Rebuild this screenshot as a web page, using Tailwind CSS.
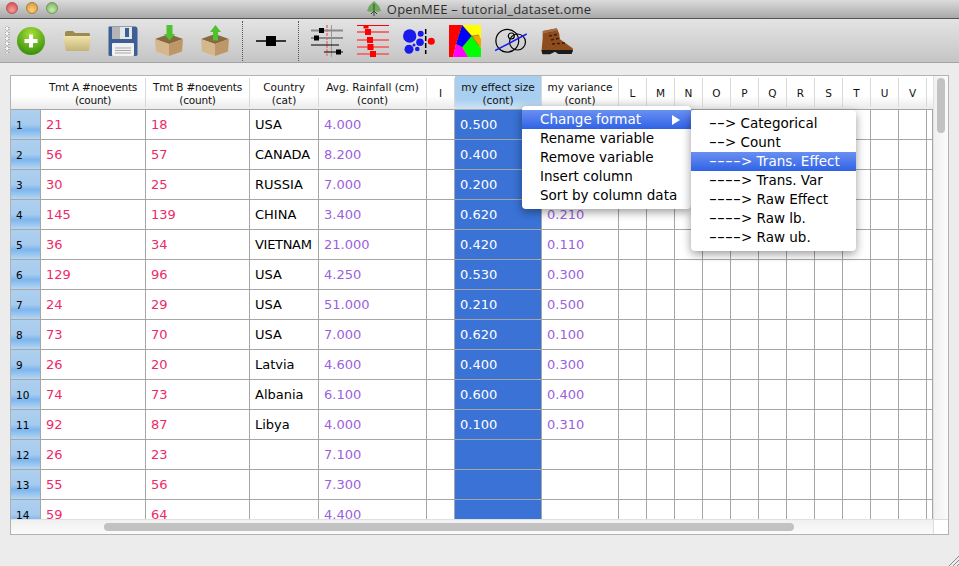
<!DOCTYPE html>
<html>
<head>
<meta charset="utf-8">
<title>OpenMEE</title>
<script src="https://cdn.jsdelivr.net/npm/@tailwindcss/browser@4"></script>
</head>
<body class="m-0 overflow-hidden">
<div class="relative w-[959px] h-[566px] overflow-hidden bg-[#ececec] font-['DejaVu_Sans',sans-serif] text-[13px] text-black">

  <!-- title bar -->
  <div class="relative h-[19px] flex items-center justify-center bg-gradient-to-b from-[#dcdcdc] to-[#a9a9a9] border-b border-[#555555]">
    <div class="absolute left-[6px] top-[2px] flex gap-2">
      <span class="w-3 h-3 rounded-full border border-[#a85a5a] bg-[radial-gradient(circle_at_50%_70%,#f6a0a0,#d8403f)]"></span>
      <span class="w-3 h-3 rounded-full border border-[#a8803a] bg-[radial-gradient(circle_at_50%_70%,#f8d080,#dc9030)]"></span>
      <span class="w-3 h-3 rounded-full border border-[#6f9a5a] bg-[radial-gradient(circle_at_50%_70%,#c8eab0,#70ad50)]"></span>
    </div>
    <div class="flex items-center gap-[5px] ml-[-2px]">
      <svg width="16" height="16" viewBox="0 0 16 16"><path d="M8 0 L13 5 L15 10 L11 11 L8 9 L5 11 L1 10 L3 5 Z" fill="#6fa85a"/><path d="M8 3 V15 M5 13 L8 10 L11 13" stroke="#2f4a2a" stroke-width="1" fill="none"/></svg>
      <span class="font-['Open_Sans',sans-serif] text-[13px] text-[#2e2e2e] leading-none tracking-[0.2px]">OpenMEE – tutorial_dataset.ome</span>
    </div>
  </div>

  <!-- toolbar -->
  <div class="relative h-[44px] flex items-center pl-[15px] bg-gradient-to-b from-[#e4e4e4] to-[#c5c5c5] border-b border-[#a3a3a3]">
    <div class="absolute left-[5px] top-[7px] w-[5px] h-[27px] [background-image:radial-gradient(circle,#f4f4f4_45%,#a8a8a8_55%,transparent_70%)] [background-size:4px_5px]"></div>
    <div class="flex items-center gap-[14px]">
      <!-- add -->
      <svg width="32" height="32" viewBox="0 0 32 32"><defs><radialGradient id="g1" cx="50%" cy="25%" r="80%"><stop offset="0" stop-color="#a6de3a"/><stop offset="1" stop-color="#2f8a08"/></radialGradient></defs><circle cx="16" cy="16" r="14" fill="url(#g1)"/><path d="M16 9.5 V22.5 M9.5 16 H22.5" stroke="#ffffff" stroke-width="4"/></svg>
      <!-- folder -->
      <svg width="32" height="32" viewBox="0 0 32 32"><defs><linearGradient id="g2" x1="0" y1="0" x2="0" y2="1"><stop offset="0" stop-color="#f0e3ab"/><stop offset="1" stop-color="#c4b377"/></linearGradient></defs><path d="M4 8 Q4 6 6 6 H12 L14 8 H28 Q29 8 29 10 V13 H4 Z" fill="#9b8a52"/><path d="M2 11 H30 L28 26 H5 Z" fill="url(#g2)"/></svg>
      <!-- floppy -->
      <svg width="32" height="32" viewBox="0 0 32 32"><path d="M2 1.5 H28.500 Q30.500 1.500 30.500 4 V29.500 Q30.500 31 28.500 31 H3 Q1.500 31 1.500 29.500 V2 Z" fill="#3c5f96"/><rect x="5" y="2" width="20" height="12" fill="#e6e6e6"/><rect x="5" y="2" width="8" height="12" fill="#b5b5b5"/><rect x="18" y="3" width="4" height="9" fill="#3c5f96"/><rect x="5" y="18" width="22" height="13" rx="1" fill="#f2f2f2"/><path d="M8 23 H24 M8 25.500 H24 M8 28 H24" stroke="#a9a9a9"/></svg>
      <!-- box in -->
      <svg width="32" height="32" viewBox="0 0 32 32"><path d="M2 14 L16 9 L30 14 L16 19 Z" fill="#86693f"/><path d="M2 14 L16 19 V31 L3 26.500 Z" fill="#d4b78a"/><path d="M30 14 L16 19 V31 L29 26.500 Z" fill="#bd9768"/><path d="M13.500 0 H19.500 V9 H22 L16.500 15.500 L11 9 H13.500 Z" fill="#4fc22e"/></svg>
      <!-- box out -->
      <svg width="32" height="32" viewBox="0 0 32 32"><path d="M2 14 L16 9 L30 14 L16 19 Z" fill="#86693f"/><path d="M2 14 L16 19 V31 L3 26.500 Z" fill="#d4b78a"/><path d="M30 14 L16 19 V31 L29 26.500 Z" fill="#bd9768"/><path d="M14 15.500 H19 V7 H22 L16.500 0 L11 7 H14 Z" fill="#4fc22e"/></svg>
    </div>
    <div class="ml-[11px] w-px h-[40px] border-l border-dotted border-[#555555]"></div>
    <svg class="ml-[12px]" width="32" height="32" viewBox="0 0 32 32"><path d="M1 16 H31" stroke="#000" stroke-width="1.500"/><rect x="11" y="11" width="10" height="10" fill="#000"/></svg>
    <div class="ml-[11px] w-px h-[40px] border-l border-dotted border-[#555555]"></div>
    <div class="ml-[12px] flex items-center gap-[14px]">
      <!-- sliders 1 -->
      <svg width="32" height="32" viewBox="0 0 32 32"><path d="M16 0 V32" stroke="#f08a8a" stroke-width="2" stroke-dasharray="3 1"/><path d="M20.500 0 V32" stroke="#999"/><path d="M0 5.500 H32 M0 13 H32" stroke="#8a8a8a" stroke-width="2"/><path d="M0 20 H28 M13 27 H32" stroke="#000"/><rect x="8" y="3" width="5" height="5" fill="#000"/><rect x="3" y="10.500" width="5" height="5" fill="#000"/><rect x="25" y="24.500" width="5" height="5" fill="#000"/></svg>
      <!-- sliders 2 -->
      <svg width="32" height="32" viewBox="0 0 32 32"><path d="M0 0.500 H32 M0 7 H32" stroke="#ff0000"/><path d="M0 15 H32 M0 22 H32 M0 29 H32" stroke="#f07070" stroke-width="2"/><rect x="6.500" y="0" width="5" height="3.500" fill="#f00"/><rect x="8" y="4" width="6" height="6" fill="#f00"/><rect x="10" y="12" width="6" height="6" fill="#f00"/><rect x="10.500" y="19" width="6" height="6" fill="#f00"/><rect x="13" y="26" width="6" height="6" fill="#f00"/></svg>
      <!-- circles -->
      <svg width="32" height="32" viewBox="0 0 32 32"><g fill="#1a1aee"><circle cx="6.700" cy="11" r="6.700"/><circle cx="17.700" cy="8.700" r="3"/><circle cx="17" cy="17.300" r="3.800"/><circle cx="11" cy="20" r="1.500"/><circle cx="6" cy="24.300" r="4.500"/><circle cx="14.300" cy="24" r="2.300"/></g><path d="M22.700 4 V29" stroke="#000" stroke-width="1.500" stroke-dasharray="5 2"/><circle cx="28.300" cy="16.300" r="3.500" fill="#f00"/></svg>
      <!-- voronoi -->
      <svg width="32" height="32" viewBox="0 0 32 32"><rect width="32" height="32" fill="#ff0"/><path d="M0 0 H13 L7 19 L4 32 H0 Z" fill="#f00"/><path d="M13 0 L22.700 11 L13.300 22.300 L7 19 Z" fill="#00f"/><path d="M22.700 11 L30 10 L32 14 V23 L30 21 Z" fill="#f7a400"/><path d="M22.700 11 L30 21 L32 23 V32 H19 L13.300 22.300 Z" fill="#0f0"/><path d="M7 19 L13.300 22.300 L19 32 H4 Z" fill="#f0f"/><path d="M13 0 L22.700 11 L13.300 22.300 L7 19 M22.700 11 L30 10 M22.700 11 L30 21" stroke="#333" stroke-width="0.400" fill="none"/></svg>
      <!-- venn -->
      <svg width="32" height="32" viewBox="0 0 32 32" fill="none" stroke="#000" stroke-width="1.200"><circle cx="12.300" cy="15.700" r="11.400"/><circle cx="16.300" cy="11" r="3"/><circle cx="22.500" cy="17" r="8"/><path d="M0 25.700 L31.700 9" stroke="#1a1aee" stroke-width="1.500"/></svg>
      <!-- boot -->
      <svg width="32" height="32" viewBox="0 0 32 32"><path d="M1.700 6 L15.700 3.300 L18 8.300 L19 14.300 L25.700 19 L31.700 23.300 L32 26.500 H0.500 L1.700 13 Z" fill="#8f4c1d"/><path d="M0.500 25 H32 L30.700 29 H17.300 L14 26.700 L9 29.300 H1.300 Z" fill="#1c1c1c"/><path d="M7 7 L17 5 M8 11 L18 9 M10 15 L19 13 M11 19 L24 18" stroke="#3a2010" stroke-width="1.500" stroke-dasharray="3 2"/><path d="M2 6 L15.500 3.500 L16.500 6 L2 8.500 Z" fill="#a76a3a"/></svg>
    </div>
  </div>

  <!-- table frame -->
  <div class="relative mt-[12px] ml-[10px] w-[939px] h-[460px] border border-[#b2b2b2] bg-white overflow-hidden">
    <!-- header -->
    <div class="grid grid-cols-[30px_105px_104px_69px_108px_28px_87px_77px_repeat(11,28px)_6px] h-[34px] border-b border-[#a6a6a6] bg-gradient-to-b from-[#ffffff] from-60% to-[#ebebeb] text-[10.5px] leading-[13px] text-center text-[#111] [&>div]:flex [&>div]:items-center [&>div]:justify-center [&>div]:border-r [&>div]:border-[#d8d8d8] [&>div]:my-[2px] [&>div]:pt-[2px]">
      <div class="!border-r-0"></div>
      <div class="tracking-[-0.25px]">Tmt A #noevents<br>(count)</div>
      <div class="tracking-[-0.2px]">Tmt B #noevents<br>(count)</div>
      <div>Country<br>(cat)</div>
      <div>Avg. Rainfall (cm)<br>(cont)</div>
      <div>I</div>
      <div class="!my-0 bg-gradient-to-b from-[#a9cff0] from-70% to-[#cfe3f5]">my effect size<br>(cont)</div>
      <div>my variance<br>(cont)</div>
      <div>L</div><div>M</div><div>N</div><div>O</div><div>P</div><div>Q</div><div>R</div><div>S</div><div>T</div><div>U</div><div>V</div><div class="!border-r-0"></div>
    </div>
    <!-- rows -->
    <div class="grid grid-cols-[30px_105px_104px_69px_108px_28px_87px_77px_repeat(11,28px)_6px] auto-rows-[30px] [&>div]:border-r [&>div]:border-b [&>div]:border-[#a6a6a6] [&>div]:flex [&>div]:items-center [&>div]:pl-[5px] [&>div:nth-child(20n+1)]:bg-[linear-gradient(#aed0ef_0%,#a6cbee_50%,#7db6ee_68%,#b5d6f3_100%)] [&>div:nth-child(20n+1)]:text-[10.5px] [&>div:nth-child(20n+1)]:pt-[3px]">
      <div>1</div><div class="text-[#ee2a66]">21</div><div class="text-[#ee2a66]">18</div><div>USA</div><div class="text-[#9b5fe0]">4.000</div><div></div><div class="bg-[#3a72d6] text-white">0.500</div><div class="text-[#9b5fe0]"></div><div></div><div></div><div></div><div></div><div></div><div></div><div></div><div></div><div></div><div></div><div></div><div></div>
      <div>2</div><div class="text-[#ee2a66]">56</div><div class="text-[#ee2a66]">57</div><div>CANADA</div><div class="text-[#9b5fe0]">8.200</div><div></div><div class="bg-[#3a72d6] text-white">0.400</div><div class="text-[#9b5fe0]"></div><div></div><div></div><div></div><div></div><div></div><div></div><div></div><div></div><div></div><div></div><div></div><div></div>
      <div>3</div><div class="text-[#ee2a66]">30</div><div class="text-[#ee2a66]">25</div><div>RUSSIA</div><div class="text-[#9b5fe0]">7.000</div><div></div><div class="bg-[#3a72d6] text-white">0.200</div><div class="text-[#9b5fe0]"></div><div></div><div></div><div></div><div></div><div></div><div></div><div></div><div></div><div></div><div></div><div></div><div></div>
      <div>4</div><div class="text-[#ee2a66]">145</div><div class="text-[#ee2a66]">139</div><div>CHINA</div><div class="text-[#9b5fe0]">3.400</div><div></div><div class="bg-[#3a72d6] text-white">0.620</div><div class="text-[#9b5fe0]">0.210</div><div></div><div></div><div></div><div></div><div></div><div></div><div></div><div></div><div></div><div></div><div></div><div></div>
      <div>5</div><div class="text-[#ee2a66]">36</div><div class="text-[#ee2a66]">34</div><div class="tracking-[-0.3px]">VIETNAM</div><div class="text-[#9b5fe0]">21.000</div><div></div><div class="bg-[#3a72d6] text-white">0.420</div><div class="text-[#9b5fe0]">0.110</div><div></div><div></div><div></div><div></div><div></div><div></div><div></div><div></div><div></div><div></div><div></div><div></div>
      <div>6</div><div class="text-[#ee2a66]">129</div><div class="text-[#ee2a66]">96</div><div>USA</div><div class="text-[#9b5fe0]">4.250</div><div></div><div class="bg-[#3a72d6] text-white">0.530</div><div class="text-[#9b5fe0]">0.300</div><div></div><div></div><div></div><div></div><div></div><div></div><div></div><div></div><div></div><div></div><div></div><div></div>
      <div>7</div><div class="text-[#ee2a66]">24</div><div class="text-[#ee2a66]">29</div><div>USA</div><div class="text-[#9b5fe0]">51.000</div><div></div><div class="bg-[#3a72d6] text-white">0.210</div><div class="text-[#9b5fe0]">0.500</div><div></div><div></div><div></div><div></div><div></div><div></div><div></div><div></div><div></div><div></div><div></div><div></div>
      <div>8</div><div class="text-[#ee2a66]">73</div><div class="text-[#ee2a66]">70</div><div>USA</div><div class="text-[#9b5fe0]">7.000</div><div></div><div class="bg-[#3a72d6] text-white">0.620</div><div class="text-[#9b5fe0]">0.100</div><div></div><div></div><div></div><div></div><div></div><div></div><div></div><div></div><div></div><div></div><div></div><div></div>
      <div>9</div><div class="text-[#ee2a66]">26</div><div class="text-[#ee2a66]">20</div><div>Latvia</div><div class="text-[#9b5fe0]">4.600</div><div></div><div class="bg-[#3a72d6] text-white">0.400</div><div class="text-[#9b5fe0]">0.300</div><div></div><div></div><div></div><div></div><div></div><div></div><div></div><div></div><div></div><div></div><div></div><div></div>
      <div>10</div><div class="text-[#ee2a66]">74</div><div class="text-[#ee2a66]">73</div><div>Albania</div><div class="text-[#9b5fe0]">6.100</div><div></div><div class="bg-[#3a72d6] text-white">0.600</div><div class="text-[#9b5fe0]">0.400</div><div></div><div></div><div></div><div></div><div></div><div></div><div></div><div></div><div></div><div></div><div></div><div></div>
      <div>11</div><div class="text-[#ee2a66]">92</div><div class="text-[#ee2a66]">87</div><div>Libya</div><div class="text-[#9b5fe0]">4.000</div><div></div><div class="bg-[#3a72d6] text-white">0.100</div><div class="text-[#9b5fe0]">0.310</div><div></div><div></div><div></div><div></div><div></div><div></div><div></div><div></div><div></div><div></div><div></div><div></div>
      <div>12</div><div class="text-[#ee2a66]">26</div><div class="text-[#ee2a66]">23</div><div></div><div class="text-[#9b5fe0]">7.100</div><div></div><div class="bg-[#3a72d6] text-white"></div><div></div><div></div><div></div><div></div><div></div><div></div><div></div><div></div><div></div><div></div><div></div><div></div><div></div>
      <div>13</div><div class="text-[#ee2a66]">55</div><div class="text-[#ee2a66]">56</div><div></div><div class="text-[#9b5fe0]">7.300</div><div></div><div class="bg-[#3a72d6] text-white"></div><div></div><div></div><div></div><div></div><div></div><div></div><div></div><div></div><div></div><div></div><div></div><div></div><div></div>
      <div>14</div><div class="text-[#ee2a66]">59</div><div class="text-[#ee2a66]">64</div><div></div><div class="text-[#9b5fe0]">4.400</div><div></div><div class="bg-[#3a72d6] text-white"></div><div></div><div></div><div></div><div></div><div></div><div></div><div></div><div></div><div></div><div></div><div></div><div></div><div></div>
    </div>
    <!-- vertical scrollbar -->
    <div class="absolute right-0 top-0 bottom-[15px] w-[15px] bg-gradient-to-r from-[#f0f0f0] to-[#fbfbfb] border-l border-[#e0e0e0]">
      <div class="ml-[3px] mt-[2px] w-[8px] h-[55px] rounded-full bg-[#c2c2c2]"></div>
    </div>
    <!-- horizontal scrollbar -->
    <div class="absolute left-0 bottom-0 right-[15px] h-[15px] bg-gradient-to-b from-[#f0f0f0] to-[#fbfbfb] border-t border-[#e0e0e0]">
      <div class="ml-[93px] mt-[3px] w-[690px] h-[8px] rounded-full bg-[#c2c2c2]"></div>
    </div>
    <div class="absolute right-0 bottom-0 w-[15px] h-[15px] bg-white border-l border-t border-[#dddddd]"></div>
  </div>

  <!-- resize grip -->
  <svg class="absolute right-0 bottom-0" width="10" height="10" viewBox="0 0 10 10"><path d="M0 10 L10 0 M4 10 L10 4 M8 10 L10 8" stroke="#8a8a8a"/></svg>

  <!-- context menu -->
  <div class="absolute left-[522px] top-[106px] w-[169px] h-[103px] bg-white rounded-[4px] shadow-[0_3px_10px_rgba(0,0,0,0.4)] pt-[4px] text-[13.5px] leading-[19px]">
    <div class="flex justify-between items-center pl-[18px] pr-[11px] bg-gradient-to-b from-[#6a8ff2] to-[#2f62e4] text-white"><span>Change format</span><svg width="8" height="10" viewBox="0 0 8 10"><path d="M0 0 L8 5 L0 10 Z" fill="#fff"/></svg></div>
    <div class="pl-[18px]">Rename variable</div>
    <div class="pl-[18px]">Remove variable</div>
    <div class="pl-[18px]">Insert column</div>
    <div class="pl-[18px]">Sort by column data</div>
  </div>

  <!-- submenu -->
  <div class="absolute left-[691px] top-[110px] w-[165px] h-[141px] bg-white rounded-[4px] shadow-[0_3px_10px_rgba(0,0,0,0.4)] pt-[4px] text-[13.5px] leading-[19px]">
    <div class="pl-[18px]"><span class="inline-block origin-left scale-x-[1.64] mr-[6.250px]">--</span>&gt; Categorical</div>
    <div class="pl-[18px]"><span class="inline-block origin-left scale-x-[1.64] mr-[6.250px]">--</span>&gt; Count</div>
    <div class="pl-[18px] bg-gradient-to-b from-[#6a8ff2] to-[#2f62e4] text-white"><span class="inline-block origin-left scale-x-[1.64] mr-[12.500px]">----</span>&gt; Trans. Effect</div>
    <div class="pl-[18px]"><span class="inline-block origin-left scale-x-[1.64] mr-[12.500px]">----</span>&gt; Trans. Var</div>
    <div class="pl-[18px]"><span class="inline-block origin-left scale-x-[1.64] mr-[12.500px]">----</span>&gt; Raw Effect</div>
    <div class="pl-[18px]"><span class="inline-block origin-left scale-x-[1.64] mr-[12.500px]">----</span>&gt; Raw lb.</div>
    <div class="pl-[18px]"><span class="inline-block origin-left scale-x-[1.64] mr-[12.500px]">----</span>&gt; Raw ub.</div>
  </div>
</div>
</body>
</html>
